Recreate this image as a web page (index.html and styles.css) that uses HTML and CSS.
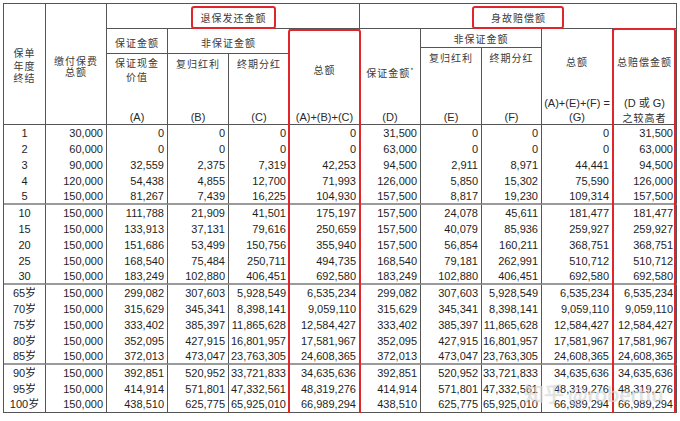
FILE: index.html
```html
<!DOCTYPE html>
<html lang="zh-CN">
<head>
<meta charset="utf-8">
<title>保单利益表</title>
<link rel="stylesheet" href="styles.css">
</head>
<body>
<div class="page">
  <div class="sheet">
    <div class="hd h-year">保单<br>年度<br>终结</div>
    <div class="hd h-prem">缴付保费<br>总额</div>
    <div class="hd h-surr"><span class="tbox tbox-surr">退保发还金额</span></div>
    <div class="hd h-death"><span class="tbox tbox-death">身故赔偿额</span></div>
    <div class="hd h-gua">保证金额</div>
    <div class="hd h-ng">非保证金额</div>
    <div class="hd h-sum1"><span class="t">总额</span><span class="lab">(A)+(B)+(C)</span></div>
    <div class="hd h-d"><span class="t">保证金额<sup>*</sup></span><span class="lab">(D)</span></div>
    <div class="hd h-ng2">非保证金额</div>
    <div class="hd h-sum2"><span class="t">总额</span><span class="lab lab2">(A)+(E)+(F) =</span><span class="lab">(G)</span></div>
    <div class="hd h-total"><span class="t">总赔偿金额</span><span class="lab lab2">(D 或 G)</span><span class="lab cn">之较高者</span></div>
    <div class="hd h-e"><span class="t">复归红利</span><span class="lab">(E)</span></div>
    <div class="hd h-f"><span class="t">终期分红</span><span class="lab">(F)</span></div>
    <div class="hd h-a"><span class="t">保证现金<br>价值</span><span class="lab">(A)</span></div>
    <div class="hd h-b"><span class="t">复归红利</span><span class="lab">(B)</span></div>
    <div class="hd h-c"><span class="t">终期分红</span><span class="lab">(C)</span></div>

    <div class="row"><span>1</span><span>30,000</span><span>0</span><span>0</span><span>0</span><span>0</span><span>31,500</span><span>0</span><span>0</span><span>0</span><span>31,500</span></div>
    <div class="row"><span>2</span><span>60,000</span><span>0</span><span>0</span><span>0</span><span>0</span><span>63,000</span><span>0</span><span>0</span><span>0</span><span>63,000</span></div>
    <div class="row"><span>3</span><span>90,000</span><span>32,559</span><span>2,375</span><span>7,319</span><span>42,253</span><span>94,500</span><span>2,911</span><span>8,971</span><span>44,441</span><span>94,500</span></div>
    <div class="row"><span>4</span><span>120,000</span><span>54,438</span><span>4,855</span><span>12,700</span><span>71,993</span><span>126,000</span><span>5,850</span><span>15,302</span><span>75,590</span><span>126,000</span></div>
    <div class="row end"><span>5</span><span>150,000</span><span>81,267</span><span>7,439</span><span>16,225</span><span>104,930</span><span>157,500</span><span>8,817</span><span>19,230</span><span>109,314</span><span>157,500</span></div>

    <div class="row"><span>10</span><span>150,000</span><span>111,788</span><span>21,909</span><span>41,501</span><span>175,197</span><span>157,500</span><span>24,078</span><span>45,611</span><span>181,477</span><span>181,477</span></div>
    <div class="row"><span>15</span><span>150,000</span><span>133,913</span><span>37,131</span><span>79,616</span><span>250,659</span><span>157,500</span><span>40,079</span><span>85,936</span><span>259,927</span><span>259,927</span></div>
    <div class="row"><span>20</span><span>150,000</span><span>151,686</span><span>53,499</span><span>150,756</span><span>355,940</span><span>157,500</span><span>56,854</span><span>160,211</span><span>368,751</span><span>368,751</span></div>
    <div class="row"><span>25</span><span>150,000</span><span>168,540</span><span>75,484</span><span>250,711</span><span>494,735</span><span>168,540</span><span>79,181</span><span>262,991</span><span>510,712</span><span>510,712</span></div>
    <div class="row end"><span>30</span><span>150,000</span><span>183,249</span><span>102,880</span><span>406,451</span><span>692,580</span><span>183,249</span><span>102,880</span><span>406,451</span><span>692,580</span><span>692,580</span></div>

    <div class="row"><span>65岁</span><span>150,000</span><span>299,082</span><span>307,603</span><span>5,928,549</span><span>6,535,234</span><span>299,082</span><span>307,603</span><span>5,928,549</span><span>6,535,234</span><span>6,535,234</span></div>
    <div class="row"><span>70岁</span><span>150,000</span><span>315,629</span><span>345,341</span><span>8,398,141</span><span>9,059,110</span><span>315,629</span><span>345,341</span><span>8,398,141</span><span>9,059,110</span><span>9,059,110</span></div>
    <div class="row"><span>75岁</span><span>150,000</span><span>333,402</span><span>385,397</span><span>11,865,628</span><span>12,584,427</span><span>333,402</span><span>385,397</span><span>11,865,628</span><span>12,584,427</span><span>12,584,427</span></div>
    <div class="row"><span>80岁</span><span>150,000</span><span>352,095</span><span>427,915</span><span>16,801,957</span><span>17,581,967</span><span>352,095</span><span>427,915</span><span>16,801,957</span><span>17,581,967</span><span>17,581,967</span></div>
    <div class="row end"><span>85岁</span><span>150,000</span><span>372,013</span><span>473,047</span><span>23,763,305</span><span>24,608,365</span><span>372,013</span><span>473,047</span><span>23,763,305</span><span>24,608,365</span><span>24,608,365</span></div>

    <div class="row"><span>90岁</span><span>150,000</span><span>392,851</span><span>520,952</span><span>33,721,833</span><span>34,635,636</span><span>392,851</span><span>520,952</span><span>33,721,833</span><span>34,635,636</span><span>34,635,636</span></div>
    <div class="row"><span>95岁</span><span>150,000</span><span>414,914</span><span>571,801</span><span>47,332,561</span><span>48,319,276</span><span>414,914</span><span>571,801</span><span>47,332,561</span><span>48,319,276</span><span>48,319,276</span></div>
    <div class="row last"><span>100岁</span><span>150,000</span><span>438,510</span><span>625,775</span><span>65,925,010</span><span>66,989,294</span><span>438,510</span><span>625,775</span><span>65,925,010</span><span>66,989,294</span><span>66,989,294</span></div>

    <div class="colbox colbox-sum"></div>
    <div class="colbox colbox-total"></div>
    <div class="watermark">知乎 @robertlu</div>
  </div>
</div>
</body>
</html>
```

FILE: styles.css
```css
* { box-sizing: border-box; margin: 0; padding: 0; }
html, body { background: #fff; }
body {
  font-family: "Liberation Sans", "Noto Sans CJK SC", sans-serif;
  font-size: 11px;
  color: #222;
}
.page { padding: 3px 0 0 3px; }

.sheet {
  position: relative;
  display: grid;
  width: 674px;
  grid-template-columns: 42px 61px 61px 61px 61px 70px 61px 61px 60px 71px 64px;
  grid-template-rows: 25px 19px 6px 71px repeat(18, 16px);
  border-top: 1px solid #555;
  border-left: 1px solid #555;
}

/* header cells */
.hd {
  border-right: 1px solid #555;
  border-bottom: 1px solid #555;
  font-family: "Noto Sans CJK SC", sans-serif;
  font-size: 10px;
  letter-spacing: 1px;
  color: #3a3a3a;
  line-height: 14px;
  text-align: center;
  display: flex;
  flex-direction: column;
  align-items: center;
}
.hd .lab {
  font-family: "Liberation Sans", "Noto Sans CJK SC", sans-serif;
  font-size: 11px;
  letter-spacing: 0;
  line-height: 13px;
  margin-top: auto;
  color: #2a2a2a;
}
.hd .lab2 { margin-bottom: 1px; }
.hd .lab2 + .lab { margin-top: 0; }
.hd .lab.cn {
  font-family: "Noto Sans CJK SC", sans-serif;
  font-size: 10px;
  letter-spacing: 1px;
  line-height: 13px;
}
.hd sup { font-size: 7px; vertical-align: 4px; letter-spacing: 0; }

.h-year { grid-column: 1; grid-row: 1 / 5; justify-content: center; line-height: 12.5px; padding-top: 4px; }
.h-prem { grid-column: 2; grid-row: 1 / 5; justify-content: center; line-height: 11.5px; padding-top: 4px; }
.h-surr { grid-column: 3 / 7; grid-row: 1; flex-direction: row; justify-content: center; align-items: flex-end; }
.h-death { grid-column: 7 / 12; grid-row: 1; flex-direction: row; justify-content: center; align-items: flex-end; }
.h-gua { grid-column: 3; grid-row: 2 / 4; justify-content: center; padding-top: 3px; }
.h-ng { grid-column: 4 / 6; grid-row: 2 / 4; justify-content: center; padding-top: 3px; }
.h-ng2 { grid-column: 8 / 10; grid-row: 2; justify-content: center; padding-top: 2px; }
.h-sum1 { grid-column: 6; grid-row: 2 / 5; padding-top: 34px; }
.h-d { grid-column: 7; grid-row: 2 / 5; padding-top: 34px; }
.h-sum2 { grid-column: 10; grid-row: 2 / 5; padding-top: 26px; }
.h-total { grid-column: 11; grid-row: 2 / 5; padding-top: 26px; }
.h-e { grid-column: 8; grid-row: 3 / 5; padding-top: 3px; }
.h-f { grid-column: 9; grid-row: 3 / 5; padding-top: 3px; }
.h-a { grid-column: 3; grid-row: 4; padding-top: 2px; }
.h-b { grid-column: 4; grid-row: 4; padding-top: 3px; }
.h-c { grid-column: 5; grid-row: 4; padding-top: 3px; }

.tbox {
  display: block;
  height: 23px;
  margin-bottom: -1px;
  border: 2px solid #e0262b;
  border-radius: 3px;
  line-height: 19px;
  position: relative;
  z-index: 2;
}
.tbox-surr { padding: 0 7px 0 8px; }
.tbox-death { padding: 0 16px 0 17px; }

/* data rows */
.row { display: contents; }
.row > span {
  border-right: 1px solid #555;
  text-align: right;
  padding-right: 3px;
  line-height: 16px;
  white-space: nowrap;
  color: #1e1e1e;
}
.row > span:first-child {
  text-align: center;
  padding-right: 0;
}
.row.end > span {
  border-bottom: 2px solid #9a9a9a;
  line-height: 15px;
}
.row.last > span {
  border-bottom: 1px solid #555;
  line-height: 15px;
}

/* highlight boxes over columns */
.colbox {
  position: absolute;
  border: 2px solid #e0262b;
  border-radius: 3px;
  pointer-events: none;
}
.colbox-sum { left: 284px; top: 25px; width: 73px; height: 390px; }
.colbox-total { left: 608px; top: 24px; width: 64px; height: 391px; }

.watermark {
  position: absolute;
  left: 520px;
  top: 375px;
  font-family: "Noto Sans CJK SC", sans-serif;
  font-size: 20px;
  color: rgba(255, 255, 255, 0.55);
  text-shadow: 0 0 1px rgba(120, 120, 120, 0.5);
  white-space: nowrap;
  pointer-events: none;
}
```
